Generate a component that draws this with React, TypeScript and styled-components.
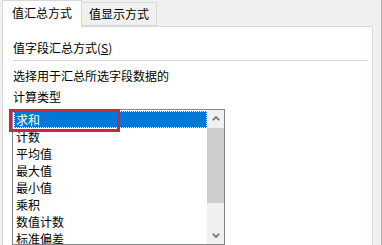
import React from 'react';
import styled, { createGlobalStyle } from 'styled-components';

const GlobalStyle = createGlobalStyle`
  html, body {
    margin: 0;
    padding: 0;
    background: #f0f0f0;
  }
  * {
    box-sizing: border-box;
  }
`;

const Window = styled.div`
  width: 382px;
  height: 245px;
  overflow: hidden;
  display: flex;
  flex-direction: column;
  background: #f0f0f0;
  border-right: 1px solid #c9a3a3;
  font-family: 'Noto Sans CJK SC', 'Noto Sans', sans-serif;
  font-size: 12px;
  color: #000;
`;

const TabStrip = styled.div`
  display: flex;
  align-items: flex-end;
  height: 28px;
  padding-left: 2px;
`;

const Tab = styled.div<{ active?: boolean }>`
  position: relative;
  z-index: 1;
  display: flex;
  align-items: center;
  justify-content: center;
  height: ${({ active }) => (active ? '27px' : '24px')};
  width: ${({ active }) => (active ? '80px' : '75px')};
  margin-bottom: ${({ active }) => (active ? '-1px' : '0')};
  padding-bottom: ${({ active }) => (active ? '2px' : '0')};
  background: ${({ active }) => (active ? '#fff' : '#f0f0f0')};
  border: 1px solid #d9d9d9;
  border-bottom: ${({ active }) => (active ? 'none' : '1px solid #d9d9d9')};
  border-left: ${({ active }) => (active ? '1px solid #d9d9d9' : 'none')};
  line-height: 16px;
`;

const Panel = styled.div`
  flex: 1;
  margin: 0 8px 0 2px;
  padding: 13px 4px 0 10px;
  background: #fff;
  border: 1px solid #d9d9d9;
  border-bottom: none;
  display: flex;
  flex-direction: column;
`;

const Line = styled.div<{ gap?: number }>`
  line-height: 16px;
  height: 16px;
  margin-top: ${({ gap = 0 }) => gap}px;
  white-space: nowrap;
`;

const Separator = styled.div`
  height: 1px;
  margin-top: 4px;
  background: #d5d5d5;
`;

const ListBox = styled.div`
  position: relative;
  display: flex;
  width: 213px;
  height: 136px;
  margin: 4px 0 0 -1px;
  border: 1px solid #828790;
  background: #fff;
`;

const Items = styled.div`
  flex: 1;
  padding: 1px 0 0 1px;
  overflow: hidden;
`;

const Item = styled.div<{ selected?: boolean }>`
  height: 17px;
  line-height: 17px;
  padding-left: 2px;
  white-space: nowrap;
  color: ${({ selected }) => (selected ? '#fff' : '#000')};
  background: ${({ selected }) => (selected ? '#0078d7' : 'transparent')};
  outline: ${({ selected }) => (selected ? '1px dotted #f5f0c8' : 'none')};
  outline-offset: -1px;
`;

const ScrollBar = styled.div`
  width: 17px;
  display: flex;
  flex-direction: column;
  background: #f0f0f0;
`;

const ArrowButton = styled.div`
  height: 17px;
  display: flex;
  align-items: center;
  justify-content: center;
  color: #606060;
`;

const Thumb = styled.div`
  height: 75px;
  margin-top: 1px;
  background: #cdcdcd;
`;

const Track = styled.div`
  flex: 1;
`;

const Highlight = styled.div`
  position: absolute;
  left: -4px;
  top: -1px;
  width: 111px;
  height: 23px;
  border: 3px solid #c9283a;
  pointer-events: none;
`;

const Chevron = ({ down }: { down?: boolean }) => (
  <svg width="8" height="5" viewBox="0 0 8 5">
    <path
      d={down ? 'M0.8 0.8 L4 4 L7.2 0.8' : 'M0.8 4.2 L4 1 L7.2 4.2'}
      fill="none"
      stroke="currentColor"
      strokeWidth="1.5"
    />
  </svg>
);

const items = ['求和', '计数', '平均值', '最大值', '最小值', '乘积', '数值计数', '标准偏差'];

export default function App() {
  return (
    <>
      <GlobalStyle />
      <Window>
        <TabStrip>
          <Tab active>值汇总方式</Tab>
          <Tab>值显示方式</Tab>
        </TabStrip>
        <Panel>
          <Line>
            值字段汇总方式(<u>S</u>)
          </Line>
          <Separator />
          <Line gap={7}>选择用于汇总所选字段数据的</Line>
          <Line gap={5}>计算类型</Line>
          <ListBox>
            <Items>
              {items.map((name, i) => (
                <Item key={name} selected={i === 0}>
                  {name}
                </Item>
              ))}
            </Items>
            <ScrollBar>
              <ArrowButton>
                <Chevron />
              </ArrowButton>
              <Thumb />
              <Track />
              <ArrowButton>
                <Chevron down />
              </ArrowButton>
            </ScrollBar>
            <Highlight />
          </ListBox>
        </Panel>
      </Window>
    </>
  );
}
